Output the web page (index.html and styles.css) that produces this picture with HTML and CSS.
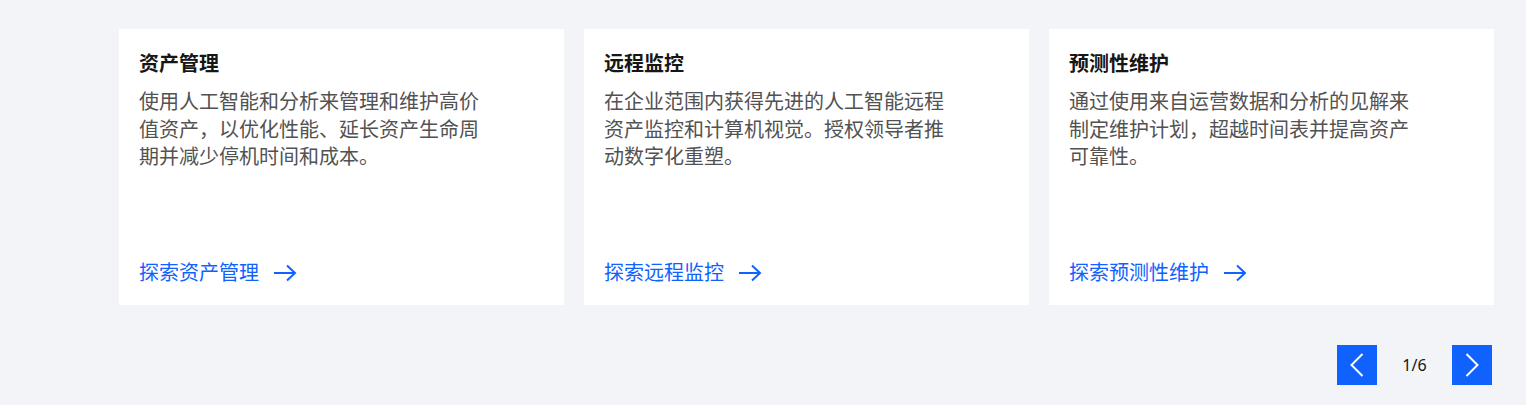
FILE: index.html
```html
<!DOCTYPE html>
<html lang="zh-CN">
  <head>
    <meta charset="UTF-8"/>
    <title>资产管理解决方案</title>
    <link rel="stylesheet" href="styles.css">
  </head>
  <body>
    <section class="carousel">
      <div class="cards">
        <article class="card">
          <h3>资产管理</h3>
          <p>使用人工智能和分析来管理和维护高价值资产，以优化性能、延长资产生命周期并减少停机时间和成本。</p>
          <a class="more" href="#">探索资产管理
            <svg width="24" height="18" viewBox="0 0 24 18" aria-hidden="true"><path d="M1 9h21M14 1.5l8 7.5-8 7.5" fill="none" stroke="currentColor" stroke-width="2"/></svg>
          </a>
        </article>
        <article class="card">
          <h3>远程监控</h3>
          <p>在企业范围内获得先进的人工智能远程资产监控和计算机视觉。授权领导者推动数字化重塑。</p>
          <a class="more" href="#">探索远程监控
            <svg width="24" height="18" viewBox="0 0 24 18" aria-hidden="true"><path d="M1 9h21M14 1.5l8 7.5-8 7.5" fill="none" stroke="currentColor" stroke-width="2"/></svg>
          </a>
        </article>
        <article class="card">
          <h3>预测性维护</h3>
          <p>通过使用来自运营数据和分析的见解来制定维护计划，超越时间表并提高资产可靠性。</p>
          <a class="more" href="#">探索预测性维护
            <svg width="24" height="18" viewBox="0 0 24 18" aria-hidden="true"><path d="M1 9h21M14 1.5l8 7.5-8 7.5" fill="none" stroke="currentColor" stroke-width="2"/></svg>
          </a>
        </article>
      </div>
      <nav class="pager">
        <button class="page-btn" aria-label="上一页">
          <svg width="14" height="24" viewBox="0 0 14 24"><path d="M12.5 1L1.5 12l11 11" fill="none" stroke="#fff" stroke-width="2"/></svg>
        </button>
        <span class="count">1/6</span>
        <button class="page-btn" aria-label="下一页">
          <svg width="14" height="24" viewBox="0 0 14 24"><path d="M1.5 1l11 11-11 11" fill="none" stroke="#fff" stroke-width="2"/></svg>
        </button>
      </nav>
    </section>
  </body>
</html>
```
FILE: styles.css
```css
body {
  margin: 0;
  background: #f2f4f8;
  font-family: "Noto Sans", "Noto Sans CJK SC", sans-serif;
  color: #161616;
}

.carousel {
  padding: 29px 32px 0 119px;
}

.cards {
  display: flex;
  gap: 20px;
}

.card {
  flex: 1;
  height: 276px;
  box-sizing: border-box;
  background: #fff;
  padding: 21px 20px 18px;
  display: flex;
  flex-direction: column;
}

.card h3 {
  margin: 0;
  font-size: 20px;
  line-height: 28px;
  font-weight: 700;
  color: #161616;
}

.card p {
  margin: 10px 0 0;
  max-width: 345px;
  font-size: 20px;
  line-height: 27.5px;
  color: #525252;
}

.more {
  margin-top: auto;
  display: flex;
  align-items: center;
  gap: 14px;
  font-size: 20px;
  line-height: 28px;
  color: #0f62fe;
  text-decoration: none;
}

.pager {
  display: flex;
  justify-content: flex-end;
  align-items: center;
  margin: 40px 2px 0 0;
}

.page-btn {
  width: 40px;
  height: 40px;
  border: 0;
  padding: 0;
  background: #0f62fe;
  display: flex;
  align-items: center;
  justify-content: center;
}

.count {
  width: 75px;
  text-align: center;
  font-size: 16px;
  color: #161616;
}
```
